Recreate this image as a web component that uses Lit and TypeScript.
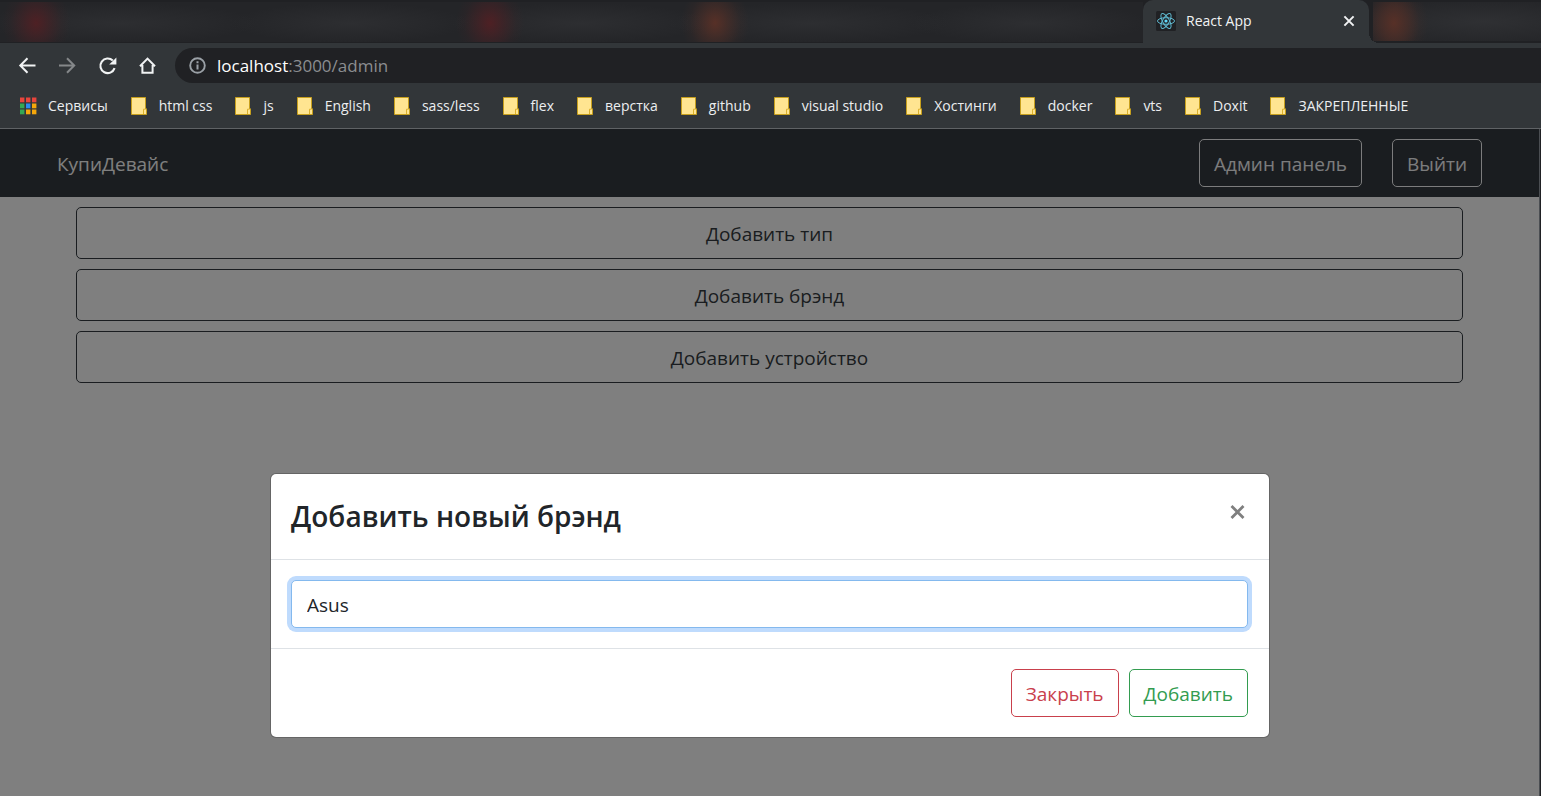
import { LitElement, html, css, svg } from "lit";
import { customElement, state } from "lit/decorators.js";

const folders = [
  "html css", "js", "English", "sass/less", "flex", "верстка", "github",
  "visual studio", "Хостинги", "docker", "vts", "Doxit", "ЗАКРЕПЛЕННЫЕ",
];

const appColors = [
  "#e8453c", "#e8453c", "#e8453c",
  "#34a853", "#2b8cf0", "#f5a70b",
  "#34a853", "#f5a70b", "#f5a70b",
];

@customElement("browser-tabs")
class BrowserTabs extends LitElement {
  static styles = css`
    :host { display: flex; height: 43px; background: #202124; }
    .idle {
      flex: 1 1 0; min-width: 0; margin-top: 2px; height: 40px;
      background:
        radial-gradient(ellipse 34px 40px at 36px 21px, #4e2024, #4e202480 40%, #4e202420 75%, transparent),
        radial-gradient(ellipse 34px 40px at 490px 21px, #4e2024, #4e202480 40%, #4e202420 75%, transparent),
        radial-gradient(ellipse 34px 40px at 715px 21px, #573027, #57302780 40%, #57302720 75%, transparent),
        radial-gradient(ellipse 140px 20px at 120px 21px, #2d2e31, transparent),
        radial-gradient(ellipse 120px 20px at 350px 21px, #2d2e31, transparent),
        radial-gradient(ellipse 130px 20px at 580px 21px, #2d2e31, transparent),
        radial-gradient(ellipse 140px 20px at 810px 21px, #2d2e31, transparent),
        radial-gradient(ellipse 120px 20px at 1030px 21px, #2d2e31, transparent),
        #242528;
    }
    .rest {
      flex: none; width: 168px; margin: 2px 0 0 4px; height: 39px;
      background:
        radial-gradient(ellipse 34px 44px at 21px 21px, #573027, #57302790 40%, #57302720 75%, transparent),
        radial-gradient(ellipse 140px 24px at 110px 20px, #2f3033, transparent),
        #242528;
    }
    .active {
      position: relative; display: flex; align-items: center; flex: none;
      box-sizing: border-box; width: 226px; padding: 0 13px 2px 13px;
      background: #323639; border-radius: 10px 10px 0 0; color: #f1f3f4;
      font-size: 14px; line-height: 20px;
    }
    .active::after {
      content: ""; position: absolute; left: 100%; bottom: 0; width: 10px; height: 10px;
      background: radial-gradient(circle at 100% 0, transparent 10px, #323639 10px);
    }
    .logo { flex: none; margin-right: 10px; }
    .title { flex: 1; }
    .close { display: flex; padding: 0; border: 0; background: none; }
  `;
  render() {
    return html`
      <div class="idle"></div>
      <div class="active">
        <svg class="logo" width="20" height="20" viewBox="0 0 20 20" aria-hidden="true">
          <rect width="20" height="20" rx="1.5" fill="#202124" />
          <g fill="none" stroke="#5fb9d0" stroke-width="1">
            <ellipse cx="10" cy="10" rx="8.5" ry="3.3" />
            <ellipse cx="10" cy="10" rx="8.5" ry="3.3" transform="rotate(60 10 10)" />
            <ellipse cx="10" cy="10" rx="8.5" ry="3.3" transform="rotate(120 10 10)" />
          </g>
          <circle cx="10" cy="10" r="1.6" fill="#61dafb" />
        </svg>
        <span class="title">React App</span>
        <button class="close" aria-label="Закрыть вкладку">
          <svg width="14" height="14" viewBox="0 0 14 14">
            <path d="M2.4 2.4l9.2 9.2M11.6 2.4l-9.2 9.2" stroke="#f1f3f4" stroke-width="2" />
          </svg>
        </button>
      </div>
      <div class="rest"></div>
    `;
  }
}

@customElement("browser-toolbar")
class BrowserToolbar extends LitElement {
  static styles = css`
    :host { display: block; background: #323639; border-bottom: 1px solid #5f6265; }
    .row { display: flex; align-items: center; height: 45px; padding-left: 17px; }
    .tool { display: flex; width: 20px; height: 20px; margin-right: 20px; padding: 0; border: 0; background: none; }
    .address {
      display: flex; align-items: center; flex: 1; height: 35px; margin-left: -2px; padding-left: 14px;
      box-sizing: border-box; border-radius: 18px 0 0 18px; background: #202124;
      color: #8b8d90; font-size: 17px; line-height: 24px;
    }
    .address svg { margin-right: 11px; }
    .host { color: #fff; }
    .bookmarks { display: flex; align-items: flex-start; height: 40px; box-sizing: border-box; padding: 8px 0 0 19px; }
    .link {
      display: flex; align-items: center; flex: none; margin-right: 23px;
      color: #eceef0; font-size: 14px; line-height: 20px; text-decoration: none;
    }
    .link svg { flex: none; margin-right: 12px; }
    .link .apps { margin-right: 11px; }
  `;
  render() {
    return html`
      <div class="row">
        <button class="tool" aria-label="Назад">
          <svg width="20" height="20" viewBox="0 0 20 20" fill="none" stroke="#f1f3f4" stroke-width="2">
            <path d="M18.5 9.5H4M10.5 2.3L3.3 9.5l7.2 7.2" />
          </svg>
        </button>
        <button class="tool" aria-label="Вперед">
          <svg width="20" height="20" viewBox="0 0 20 20" fill="none" stroke="#85888a" stroke-width="2">
            <path d="M2 9.5h14.5M10 2.3l7.2 7.2-7.2 7.2" />
          </svg>
        </button>
        <button class="tool" aria-label="Обновить">
          <svg width="20" height="20" viewBox="0 0 20 20">
            <path d="M17.6 12.2A7.3 7.3 0 1 1 15.8 4.6" fill="none" stroke="#f1f3f4" stroke-width="2.1" />
            <path d="M19.4 1.4v7.2h-7.2z" fill="#f1f3f4" />
          </svg>
        </button>
        <button class="tool" aria-label="Домой">
          <svg width="20" height="20" viewBox="0 0 20 20" fill="none" stroke="#f1f3f4" stroke-width="2">
            <path d="M3 10.2l7.5-7.6 7.5 7.6M5.4 9v7.8h10.2V9" />
          </svg>
        </button>
        <div class="address">
          <svg width="17" height="17" viewBox="0 0 17 17" fill="none" stroke="#9aa0a6">
            <circle cx="8.5" cy="8.5" r="7.3" stroke-width="1.9" />
            <path d="M8.5 7.4v5.1M8.5 4.2v2" stroke-width="2" />
          </svg>
          <span><span class="host">localhost</span>:3000/admin</span>
        </div>
      </div>
      <nav class="bookmarks">
        <a class="link" href="#">
          <svg class="apps" width="18" height="18" viewBox="0 0 18 18">
            ${appColors.map((c, i) => svg`<rect x=${1 + (i % 3) * 6} y=${(Math.floor(i / 3) * 6) + 0.5} width="4.4" height="4.8" fill=${c} />`)}
          </svg>
          Сервисы
        </a>
        ${folders.map((name) => html`
          <a class="link" href="#">
            <svg width="16" height="18" viewBox="0 0 16 18">
              <path d="M.5.5h14v11.3h1v5.7H.5z" fill="#ffe591" stroke="#c79f1c" />
              <path d="M12.5 17v-4.8h2" fill="none" stroke="#dcb02c" />
            </svg>
            ${name}
          </a>`)}
      </nav>
    `;
  }
}

@customElement("shop-admin")
class ShopAdmin extends LitElement {
  static styles = css`
    :host { display: block; font-size: 19px; line-height: 30px; color: #212529; }
    .nav {
      display: flex; align-items: center; gap: 30px; height: 68px; box-sizing: border-box;
      padding: 0 57px; background: #343a40;
    }
    .brand { margin-right: auto; padding-top: 2px; color: #fff; text-decoration: none; }
    .btn {
      height: 48px; box-sizing: border-box; padding: 2px 14px 0; border: 1px solid; border-radius: 5px;
      background: none; font: inherit; cursor: pointer;
    }
    .light { color: #f8f9fa; }
    .actions { display: flex; flex-direction: column; gap: 10px; padding: 10px 76px; }
    .dark { height: 52px; color: #343a40; }
  `;
  render() {
    return html`
      <nav class="nav">
        <a class="brand" href="#">КупиДевайс</a>
        <button class="btn light">Админ панель</button>
        <button class="btn light">Выйти</button>
      </nav>
      <main class="actions">
        <button class="btn dark">Добавить тип</button>
        <button class="btn dark">Добавить брэнд</button>
        <button class="btn dark">Добавить устройство</button>
      </main>
    `;
  }
}

@customElement("brand-dialog")
class BrandDialog extends LitElement {
  @state() declare name: string;
  constructor() {
    super();
    this.name = "Asus";
  }
  static styles = css`
    :host { display: block; width: 100%; max-width: 1000px; font-size: 19px; line-height: 30px; color: #212529; }
    .dialog { border: 1px solid rgba(0, 0, 0, 0.2); border-radius: 6px; background: #fff; background-clip: padding-box; }
    .header { display: flex; justify-content: space-between; align-items: flex-start; padding: 20px 21px 20px 20px; border-bottom: 1px solid #dee2e6; }
    .title { margin: 0; font-size: 28px; line-height: 45px; font-weight: 600; }
    .close { display: flex; padding: 10px 3px; border: 0; background: none; cursor: pointer; }
    .body { padding: 20px 21px 20px 20px; }
    .field {
      display: block; width: 100%; height: 48px; box-sizing: border-box; padding: 2px 15px 0;
      border: 1px solid #84b9ee; border-radius: 5px; outline: 0; background: #fff;
      box-shadow: 0 0 0 4px #bfdbfd; color: #212529; font: inherit;
    }
    .footer { display: flex; justify-content: flex-end; gap: 10px; padding: 20px 21px 20px 20px; border-top: 1px solid #dee2e6; }
    .btn {
      height: 48px; box-sizing: border-box; padding: 2px 14px 0; border: 1px solid; border-radius: 5px;
      background: none; font: inherit; cursor: pointer;
    }
    .danger { color: #c9404c; }
    .success { color: #339c50; }
  `;
  render() {
    return html`
      <div class="dialog" role="dialog" aria-modal="true" aria-labelledby="title">
        <div class="header">
          <h4 class="title" id="title">Добавить новый брэнд</h4>
          <button class="close" aria-label="Закрыть">
            <svg width="15" height="15" viewBox="0 0 15 15">
              <path d="M1.5 2l12 12M13.5 2l-12 12" stroke="#7f7f7f" stroke-width="2.8" />
            </svg>
          </button>
        </div>
        <div class="body">
          <input class="field" type="text" aria-label="Название брэнда" .value=${this.name}
            @input=${(e: Event) => (this.name = (e.target as HTMLInputElement).value)} />
        </div>
        <div class="footer">
          <button class="btn danger">Закрыть</button>
          <button class="btn success">Добавить</button>
        </div>
      </div>
    `;
  }
}

@customElement("app-root")
class AppRoot extends LitElement {
  static styles = css`
    :host {
      display: flex; flex-direction: column; height: 100vh; overflow: hidden;
      font-family: "Open Sans", "Noto Sans", sans-serif; background: #202124;
    }
    .page {
      position: relative; flex: 1; margin-right: 1px; border-right: 1px solid #4b4e52;
      overflow: hidden; background: #fff;
    }
    .backdrop {
      position: absolute; inset: 0; display: flex; justify-content: center; align-items: flex-start;
      padding: 344px 20px 0 21px; background: rgba(0, 0, 0, 0.5);
    }
  `;
  render() {
    return html`
      <browser-tabs></browser-tabs>
      <browser-toolbar></browser-toolbar>
      <div class="page">
        <shop-admin></shop-admin>
        <div class="backdrop"><brand-dialog></brand-dialog></div>
      </div>
    `;
  }
}
